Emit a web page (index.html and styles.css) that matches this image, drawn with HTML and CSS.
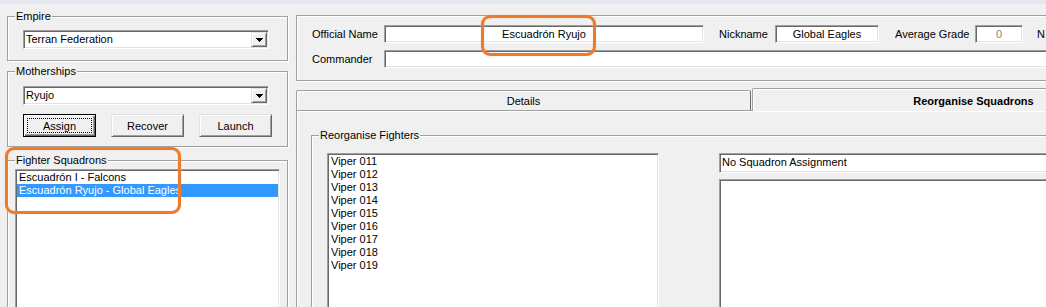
FILE: index.html
```html
<!DOCTYPE html>
<html lang="en">
  <head>
    <meta charset="UTF-8" />
    <title>Fighter Squadrons</title>
    <link rel="stylesheet" href="styles.css">
  </head>
  <body>
    <div class="strip"></div>

    <div class="form">
      <div class="left">
        <fieldset class="group group-empire">
          <legend>Empire</legend>
          <div class="combo">
            <span class="combo-text">Terran Federation</span>
            <span class="combo-btn">
              <svg width="7" height="4" viewBox="0 0 7 4"><path d="M0 0h7v1H0zM1 1h5v1H1zM2 2h3v1H2zM3 3h1v1H3z" /></svg>
            </span>
          </div>
        </fieldset>

        <fieldset class="group group-ships">
          <legend>Motherships</legend>
          <div class="combo">
            <span class="combo-text">Ryujo</span>
            <span class="combo-btn">
              <svg width="7" height="4" viewBox="0 0 7 4"><path d="M0 0h7v1H0zM1 1h5v1H1zM2 2h3v1H2zM3 3h1v1H3z" /></svg>
            </span>
          </div>
          <div class="buttons">
            <button class="btn default"><span class="focus">Assign</span></button>
            <button class="btn">Recover</button>
            <button class="btn">Launch</button>
          </div>
        </fieldset>

        <fieldset class="group group-squadrons">
          <legend>Fighter Squadrons</legend>
          <ul class="listbox squad-list">
            <li>Escuadrón I - Falcons</li>
            <li class="selected">Escuadrón Ryujo - Global Eagles</li>
          </ul>
        </fieldset>
      </div>

      <div class="right">
        <fieldset class="group group-info">
          <div class="info-row">
            <span class="info-label">Official Name</span>
            <div class="field name-field">Escuadrón Ryujo</div>
            <span class="nick-label">Nickname</span>
            <div class="field nick-field">Global Eagles</div>
            <span class="grade-label">Average Grade</span>
            <div class="field grade-field">0</div>
            <span class="more-label">N</span>
          </div>
          <div class="info-row">
            <span class="info-label">Commander</span>
            <div class="field commander-field"></div>
          </div>
        </fieldset>

        <div class="tabs">
          <div class="tab">Details</div>
          <div class="tab active">Reorganise Squadrons</div>
        </div>
        <div class="tab-page">
          <fieldset class="group group-reorg">
            <legend>Reorganise Fighters</legend>
            <div class="reorg">
              <ul class="listbox fighter-list">
                <li>Viper 011</li>
                <li>Viper 012</li>
                <li>Viper 013</li>
                <li>Viper 014</li>
                <li>Viper 015</li>
                <li>Viper 016</li>
                <li>Viper 017</li>
                <li>Viper 018</li>
                <li>Viper 019</li>
              </ul>
              <div class="assign-col">
                <div class="combo combo-wide">
                  <span class="combo-text">No Squadron Assignment</span>
                  <span class="combo-btn">
                    <svg width="7" height="4" viewBox="0 0 7 4"><path d="M0 0h7v1H0zM1 1h5v1H1zM2 2h3v1H2zM3 3h1v1H3z" /></svg>
                  </span>
                </div>
                <ul class="listbox assigned-list"></ul>
              </div>
            </div>
          </fieldset>
        </div>
      </div>
    </div>

    <div class="callout callout-name"></div>
    <div class="callout callout-squadrons"></div>
  </body>
</html>
```

FILE: styles.css
```css
body {
  margin: 0;
  width: 1046px;
  height: 307px;
  overflow: hidden;
  position: relative;
  background: #f0f0f0;
  color: #000;
  font-family: "Liberation Sans", Arial, sans-serif;
  font-size: 11px;
}

.strip {
  height: 4px;
  background: #e3e9ef;
}

.form {
  display: flex;
  gap: 8px;
  width: 1240px;
  padding-left: 7px;
}

.left {
  width: 281px;
  flex: none;
}

.right {
  width: 940px;
  flex: none;
}

/* etched group box */
.group {
  margin: 0;
  padding: 0;
  border: 1px solid #a0a0a0;
  box-shadow: inset 1px 1px 0 #fff, 1px 1px 0 #fff;
  min-width: 0;
}

.group legend {
  margin-left: 7px;
  padding: 0 1px;
  line-height: 13px;
  background: #f0f0f0;
}

.group-empire {
  margin-top: 6px;
}

.group-empire .combo {
  margin: 7px 0 11px 15px;
}

.group-ships {
  margin-top: 4px;
}

.group-ships .combo {
  margin: 8px 0 0 15px;
}

.group-squadrons {
  margin-top: 7px;
  height: 200px;
}

/* combo box */
.combo {
  display: flex;
  box-sizing: border-box;
  width: 246px;
  height: 19px;
  padding: 1px;
  background: #fff;
  border: 1px solid;
  border-color: #a0a0a0 #fff #fff #a0a0a0;
  box-shadow: inset 1px 1px 0 #696969, inset -1px -1px 0 #e3e3e3;
}

.combo-text {
  flex: 1;
  padding-left: 1px;
  line-height: 15px;
  white-space: nowrap;
}

.combo-btn {
  display: flex;
  align-items: center;
  justify-content: center;
  box-sizing: border-box;
  width: 16px;
  background: #f0f0f0;
  border: 1px solid;
  border-color: #e3e3e3 #696969 #696969 #e3e3e3;
  box-shadow: inset 1px 1px 0 #fff, inset -1px -1px 0 #a0a0a0;
}

.combo-btn svg {
  display: block;
  fill: #000;
}

.combo-wide {
  width: auto;
  height: 20px;
  margin-bottom: 6px;
}

/* push buttons */
.buttons {
  display: flex;
  gap: 15px;
  margin: 9px 0 9px 15px;
}

.btn {
  display: flex;
  align-items: center;
  justify-content: center;
  box-sizing: border-box;
  width: 73px;
  height: 23px;
  padding: 0;
  background: #f0f0f0;
  border: 1px solid;
  border-color: #e3e3e3 #696969 #696969 #e3e3e3;
  box-shadow: inset 1px 1px 0 #fff, inset -1px -1px 0 #a0a0a0;
  font-family: inherit;
  font-size: 11px;
  color: #000;
}

.btn.default {
  border-color: #000;
  box-shadow: inset 1px 1px 0 #fff, inset -1px -1px 0 #696969, inset -2px -2px 0 #a0a0a0;
}

.btn .focus {
  flex: 1;
  align-self: stretch;
  display: flex;
  align-items: center;
  justify-content: center;
  margin: 3px;
  border: 1px dotted #000;
}

/* list boxes */
.listbox {
  margin: 0;
  padding: 1px;
  list-style: none;
  background: #fff;
  border: 1px solid;
  border-color: #a0a0a0 #fff #fff #a0a0a0;
  box-shadow: inset 1px 1px 0 #696969, inset -1px -1px 0 #e3e3e3;
}

.listbox li {
  padding-left: 2px;
  line-height: 13px;
  white-space: nowrap;
}

.listbox li.selected {
  background: #3399ff;
  color: #fff;
}

.squad-list {
  width: 261px;
  height: 200px;
  margin: 2px 0 0 7px;
}

/* top info group */
.group-info {
  margin-top: 11px;
  padding: 9px 0 12px 15px;
}

.info-row {
  display: flex;
  align-items: center;
  height: 18px;
}

.info-row + .info-row {
  margin-top: 7px;
}

.info-label {
  width: 72px;
  flex: none;
}

.field {
  box-sizing: border-box;
  height: 18px;
  background: #fff;
  border: 1px solid;
  border-color: #a0a0a0 #fff #fff #a0a0a0;
  box-shadow: inset 1px 1px 0 #696969, inset -1px -1px 0 #e3e3e3;
  line-height: 16px;
  text-align: center;
  white-space: nowrap;
  flex: none;
}

.name-field {
  width: 320px;
}

.nick-label {
  width: 56px;
  margin-left: 15px;
}

.nick-field {
  width: 104px;
}

.grade-label {
  width: 80px;
  margin-left: 16px;
}

.grade-field {
  width: 48px;
  color: #808080;
}

.more-label {
  margin-left: 14px;
}

.commander-field {
  flex: 1;
}

/* tab control */
.tabs {
  display: flex;
  align-items: flex-end;
  height: 22px;
  margin-top: 7px;
  position: relative;
  z-index: 1;
}

.tab {
  box-sizing: border-box;
  width: 455px;
  height: 20px;
  padding-top: 1px;
  background: #f0f0f0;
  border: 1px solid #a0a0a0;
  border-right-color: #696969;
  border-bottom: none;
  border-radius: 2px 2px 0 0;
  box-shadow: inset 1px 1px 0 #fff;
  line-height: 18px;
  text-align: center;
}

.tab.active {
  width: 443px;
  height: 23px;
  margin-left: 1px;
  margin-bottom: -1px;
  padding-top: 3px;
  font-weight: bold;
}

.tab-page {
  height: 200px;
  padding-left: 14px;
  border-top: 1px solid #a0a0a0;
  border-left: 1px solid #a0a0a0;
  box-shadow: inset 1px 1px 0 #fff;
  overflow: hidden;
}

.group-reorg {
  margin-top: 18px;
  height: 200px;
}

.reorg {
  display: flex;
  margin-top: 11px;
}

.fighter-list {
  width: 328px;
  height: 200px;
  margin-left: 15px;
  flex: none;
}

.assign-col {
  flex: 1;
  margin-left: 60px;
}

.assigned-list {
  height: 200px;
}

/* orange annotations drawn over the form */
.callout {
  position: absolute;
  box-sizing: border-box;
  border: 3px solid #eb7c2e;
  border-radius: 9px;
  box-shadow: 0 0 1px #f3a66a, inset 0 0 1px #f3a66a;
}

.callout-name {
  left: 481px;
  top: 15px;
  width: 115px;
  height: 41px;
}

.callout-squadrons {
  left: 5px;
  top: 147px;
  width: 176px;
  height: 67px;
}
```
